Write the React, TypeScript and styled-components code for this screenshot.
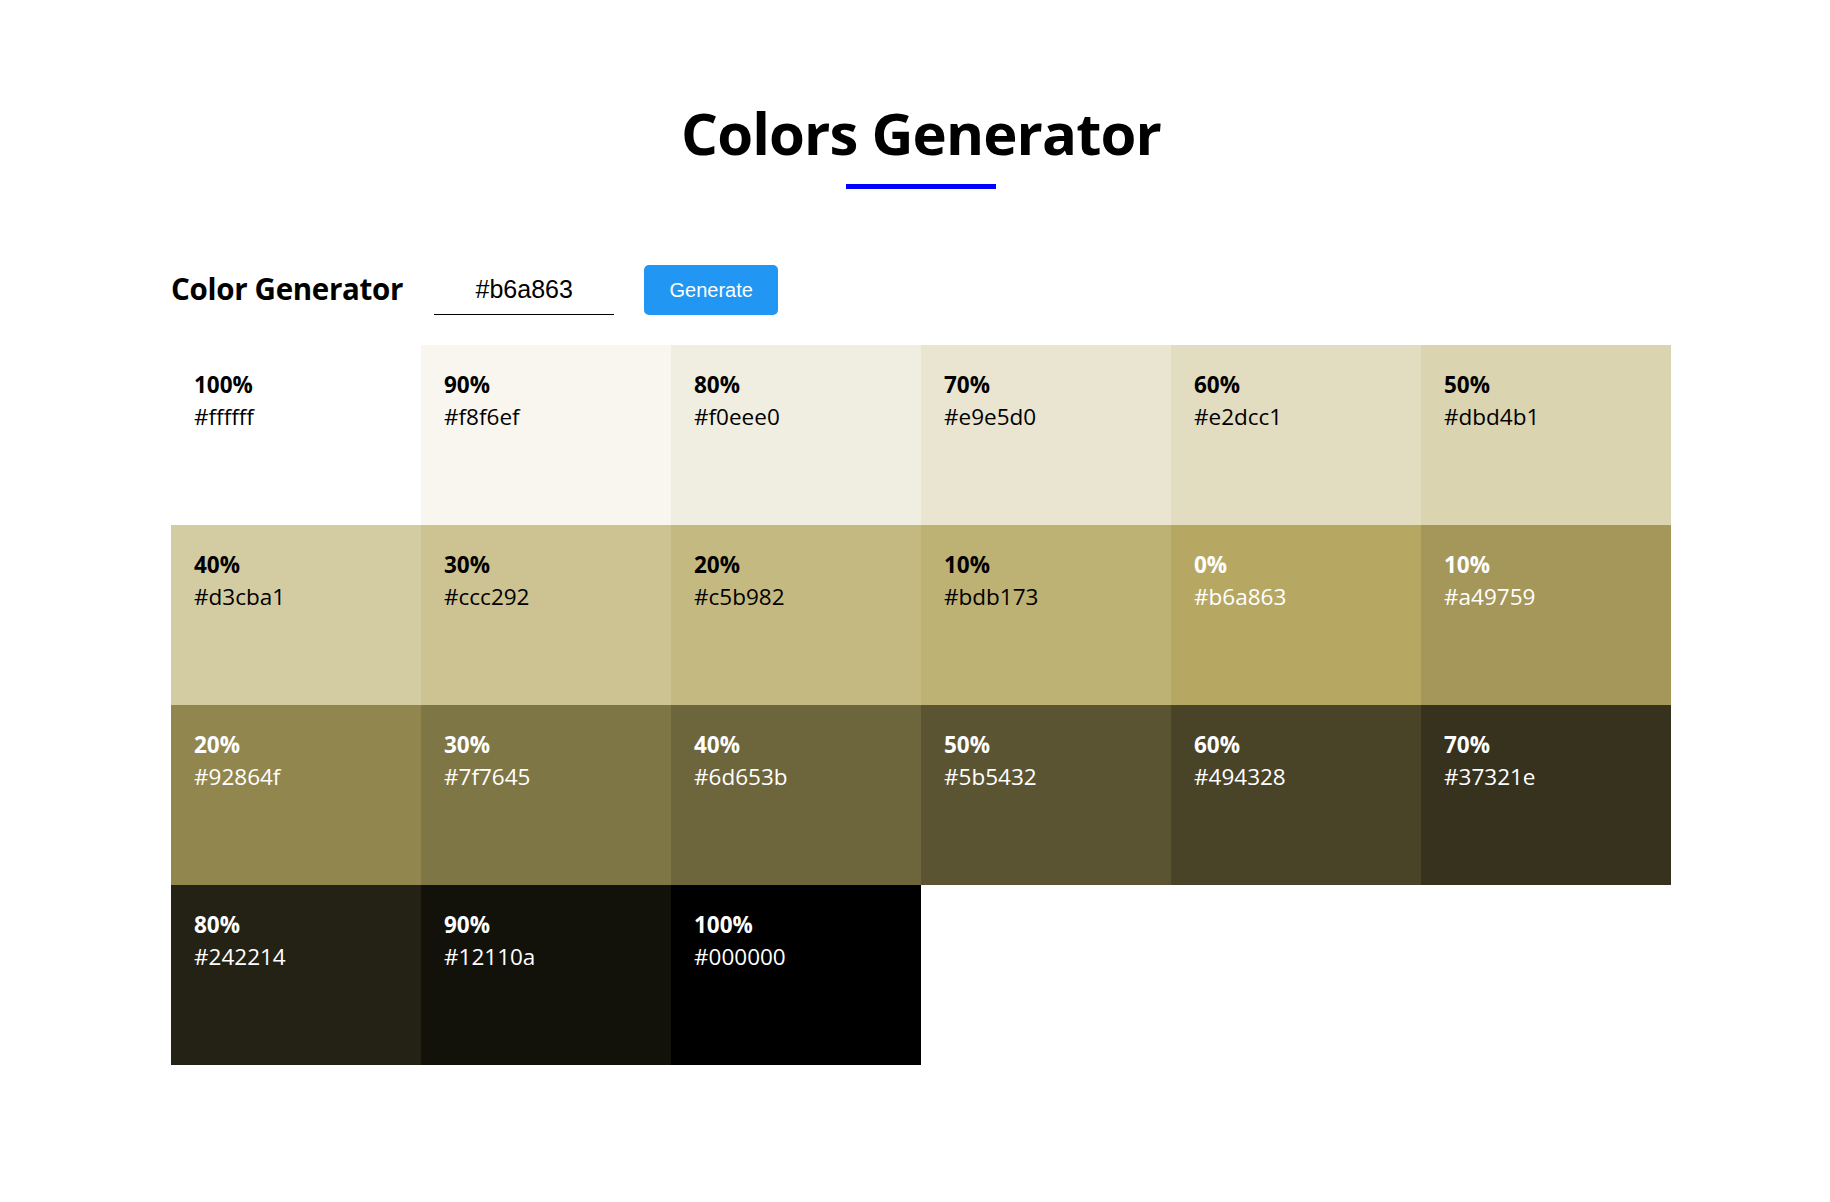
import React from "react";
import styled, { createGlobalStyle } from "styled-components";

const GlobalStyle = createGlobalStyle`
  * { box-sizing: border-box; }
  body {
    margin: 0;
    background: #ffffff;
    font-family: "Open Sans", "Noto Sans", sans-serif;
    color: #000;
  }
`;

const Page = styled.main`
  padding: 93px 0 120px 12px;
`;

const Header = styled.header`
  display: flex;
  flex-direction: column;
  align-items: center;
`;

const Title = styled.h1`
  margin: 0;
  font-size: 58px;
  line-height: 80px;
  font-weight: 700;
  letter-spacing: -0.9px;
`;

const Underline = styled.div`
  width: 150px;
  height: 5px;
  background: #0000ff;
  margin-top: 11px;
`;

const Content = styled.section`
  width: 1500px;
  margin: 0 auto;
`;

const FormRow = styled.form`
  display: flex;
  align-items: center;
  margin-top: 76px;
  margin-bottom: 30px;
`;

const FormTitle = styled.h3`
  margin: 0 31px 3px 0;
  font-size: 29.5px;
  font-weight: 700;
  letter-spacing: -0.3px;
`;

const HexInput = styled.input`
  width: 180px;
  height: 50px;
  border: none;
  border-bottom: 1px solid #000;
  outline: none;
  text-align: center;
  font-family: "Liberation Sans", Arial, sans-serif;
  font-size: 25px;
  color: #000;
  padding: 0;
  background: transparent;
`;

const GenerateButton = styled.button`
  margin-left: 30px;
  width: 134px;
  height: 50px;
  border: none;
  border-radius: 5px;
  background: #2196f3;
  color: #fff;
  font-family: "Liberation Sans", Arial, sans-serif;
  font-size: 20px;
  cursor: pointer;
`;

const Grid = styled.div`
  display: grid;
  grid-template-columns: repeat(6, 250px);
  grid-auto-rows: 180px;
`;

const Swatch = styled.article<{ $bg: string; $light: boolean }>`
  background: ${(p) => p.$bg};
  color: ${(p) => (p.$light ? "#ffffff" : "#000000")};
  padding: 24px 23px;
`;

const Percent = styled.p`
  margin: 0;
  font-size: 22.5px;
  line-height: 32px;
  font-weight: 700;
`;

const Hex = styled.p`
  margin: 0;
  font-size: 22.5px;
  line-height: 32px;
  font-weight: 400;
`;

const colors: [string, string][] = [
  ["100%", "ffffff"],
  ["90%", "f8f6ef"],
  ["80%", "f0eee0"],
  ["70%", "e9e5d0"],
  ["60%", "e2dcc1"],
  ["50%", "dbd4b1"],
  ["40%", "d3cba1"],
  ["30%", "ccc292"],
  ["20%", "c5b982"],
  ["10%", "bdb173"],
  ["0%", "b6a863"],
  ["10%", "a49759"],
  ["20%", "92864f"],
  ["30%", "7f7645"],
  ["40%", "6d653b"],
  ["50%", "5b5432"],
  ["60%", "494328"],
  ["70%", "37321e"],
  ["80%", "242214"],
  ["90%", "12110a"],
  ["100%", "000000"],
];

export default function App() {
  return (
    <>
      <GlobalStyle />
      <Page>
        <Header>
          <Title>Colors Generator</Title>
          <Underline />
        </Header>
        <Content>
          <FormRow onSubmit={(e) => e.preventDefault()}>
            <FormTitle>Color Generator</FormTitle>
            <HexInput type="text" defaultValue="#b6a863" />
            <GenerateButton type="submit">Generate</GenerateButton>
          </FormRow>
          <Grid>
            {colors.map(([pct, hex], i) => (
              <Swatch key={i} $bg={`#${hex}`} $light={i >= 10}>
                <Percent>{pct}</Percent>
                <Hex>#{hex}</Hex>
              </Swatch>
            ))}
          </Grid>
        </Content>
      </Page>
    </>
  );
}
